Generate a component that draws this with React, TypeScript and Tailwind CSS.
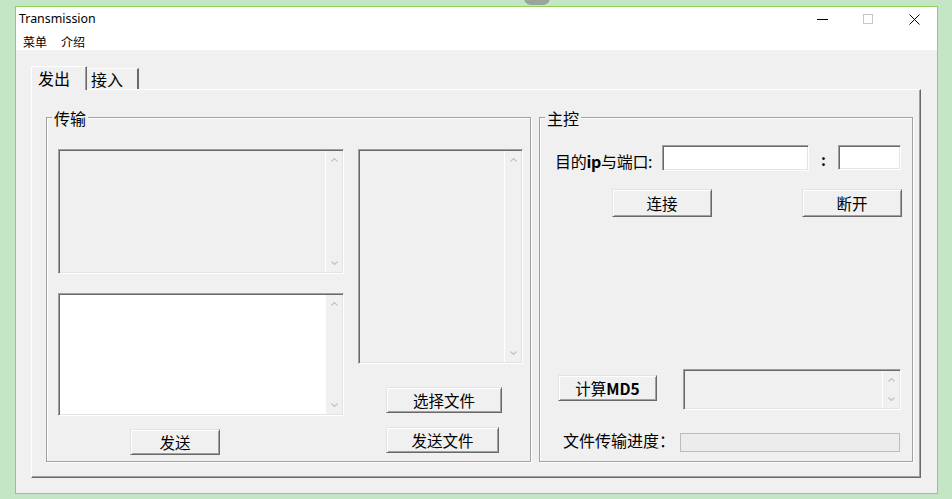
import React from "react";

const CJK = { fontFamily: '"Noto Sans CJK SC", "Noto Sans", sans-serif' };

function Up() {
  return (
    <svg width="7" height="4" viewBox="0 0 7 4">
      <path d="M0.5 3.5 L3.5 0.5 L6.5 3.5" fill="none" stroke="#c2c2c2" strokeWidth="1.2" />
    </svg>
  );
}
function Down() {
  return (
    <svg width="7" height="4" viewBox="0 0 7 4">
      <path d="M0.5 0.5 L3.5 3.5 L6.5 0.5" fill="none" stroke="#c2c2c2" strokeWidth="1.2" />
    </svg>
  );
}

function ScrollBar() {
  return (
    <div className="w-[17px] h-full shrink-0 border-l border-white bg-[#f0f0f0] flex flex-col items-center justify-between py-[7px]">
      <Up />
      <Down />
    </div>
  );
}

const sunken =
  "flex border border-t-[#a0a0a0] border-l-[#a0a0a0] border-b-white border-r-white shadow-[inset_1px_1px_0_#696969,inset_-1px_-1px_0_#e3e3e3] p-[1px]";

const raised =
  "flex items-center justify-center border border-t-[#e3e3e3] border-l-[#e3e3e3] border-b-[#696969] border-r-[#696969] bg-[#f0f0f0] shadow-[inset_1px_1px_0_#ffffff,inset_-1px_-1px_0_#a0a0a0] text-[15.5px] leading-[16px] text-black";

function Group({ label, className, children }: { label: string; className: string; children: React.ReactNode }) {
  return (
    <div className={"relative border border-[#a0a0a0] shadow-[inset_1px_1px_0_#ffffff,1px_1px_0_#ffffff] " + className}>
      <div className="absolute left-[5px] top-[-8px] px-[2px] bg-[#f0f0f0] text-[16px] leading-[16px] text-black" style={CJK}>
        {label}
      </div>
      {children}
    </div>
  );
}

export default function App() {
  return (
    <div className="relative w-[952px] h-[499px] overflow-hidden bg-[#c4e6c4] pt-[6px] pl-[15px]" style={CJK}>
      <div className="absolute left-[524px] top-[-2px] w-[26px] h-[7px] rounded-b-full bg-[#9aa69a]" />
      <div className="w-[923px] h-[488px] border border-[#8fd25a] bg-white flex flex-col">
        {/* title bar */}
        <div className="h-[26px] flex items-start shrink-0">
          <div
            className="pl-[3px] pt-[5px] text-[12.4px] leading-[14px] text-black flex-1"
            style={{ fontFamily: '"Noto Sans", "Liberation Sans", sans-serif' }}
          >
            Transmission
          </div>
          <div className="flex">
            <div className="w-[46px] h-[26px] flex justify-center pt-[7px]">
              <svg width="11" height="10" viewBox="0 0 11 10">
                <line x1="0" y1="5.5" x2="11" y2="5.5" stroke="#000" strokeWidth="1" />
              </svg>
            </div>
            <div className="w-[46px] h-[26px] flex justify-center pt-[7px]">
              <svg width="10" height="10" viewBox="0 0 10 10">
                <rect x="0.5" y="0.5" width="9" height="9" fill="none" stroke="#c6c6c6" strokeWidth="1" />
              </svg>
            </div>
            <div className="w-[46px] h-[26px] flex justify-center pt-[7px]">
              <svg width="11" height="11" viewBox="0 0 11 11">
                <path d="M0.5 0.5 L10.5 10.5 M10.5 0.5 L0.5 10.5" stroke="#000" strokeWidth="1" fill="none" />
              </svg>
            </div>
          </div>
        </div>
        {/* menu */}
        <div className="h-[17px] flex items-center pl-[7px] text-[12px] leading-[17px] text-black shrink-0">
          <span>菜单</span>
          <span className="ml-[14px]">介绍</span>
        </div>
        {/* client */}
        <div className="flex-1 bg-[#f0f0f0] pt-[16px] pl-[15px]">
          {/* tabs */}
          <div className="flex items-end h-[23px]">
            <div className="relative z-10 w-[56px] h-[24px] -mb-[1px] bg-[#f0f0f0] border-t border-l border-white border-r border-r-[#696969] shadow-[inset_-1px_0_0_#a0a0a0] flex items-start pl-[6px] pt-[3px] text-[16px] leading-[16px] text-black">
              发出
            </div>
            <div className="w-[52px] h-[21px] border-t border-white border-r-2 border-r-[#696969] flex items-start pl-[4px] pt-[2px] text-[16px] leading-[16px] text-black">
              接入
            </div>
          </div>
          {/* panel */}
          <div className="w-[890px] h-[389px] border border-t-white border-l-white border-b-[#696969] border-r-[#696969] shadow-[inset_-1px_-1px_0_#a0a0a0] flex pl-[14px] pt-[27px] gap-[8px]">
            <Group label="传输" className="w-[485px] h-[345px] flex pl-[11px] pt-[31px]">
              <div className="w-[286px] flex flex-col">
                <div className={sunken + " h-[125px] bg-[#f0f0f0]"}>
                  <div className="flex-1" />
                  <ScrollBar />
                </div>
                <div className={sunken + " h-[123px] mt-[19px] bg-white"}>
                  <div className="flex-1 bg-white" />
                  <ScrollBar />
                </div>
                <div className={raised + " w-[90px] h-[26px] mt-[13px] ml-[72px]"}>发送</div>
              </div>
              <div className="w-[165px] ml-[14px] flex flex-col">
                <div className={sunken + " h-[215px] bg-[#f0f0f0]"}>
                  <div className="flex-1" />
                  <ScrollBar />
                </div>
                <div className={raised + " w-[116px] h-[26px] mt-[23px] ml-[28px]"}>选择文件</div>
                <div className={raised + " w-[113px] h-[26px] mt-[14px] ml-[28px]"}>发送文件</div>
              </div>
            </Group>
            <Group label="主控" className="w-[374px] h-[345px] flex flex-col pl-[15px] pt-[27px]">
              <div className="flex items-start h-[26px]">
                <div className="w-[107px] mt-[8px] text-[16px] leading-[16px] text-black whitespace-nowrap tracking-[-0.3px]">
                  目的<span className="font-bold">ip</span>与端口:
                </div>
                <div className={sunken + " w-[147px] h-[26px] bg-white"} />
                <div className="w-[29px] mt-[7px] text-center text-[15px] leading-[16px] font-bold text-black">:</div>
                <div className={sunken + " w-[63px] h-[25px] bg-white"} />
              </div>
              <div className="flex mt-[18px]">
                <div className={raised + " w-[100px] h-[28px] ml-[57px] border-[#646464] border-t-[#646464] border-l-[#646464] shadow-[inset_1px_1px_0_#ffffff,inset_-1px_-1px_0_#696969,inset_-2px_-2px_0_#a0a0a0]"}>
                  连接
                </div>
                <div className={raised + " w-[100px] h-[28px] ml-[90px]"}>断开</div>
              </div>
              <div className="flex items-start mt-[152px]">
                <div className={raised + " w-[99px] h-[26px] mt-[6px] ml-[3px]"}>
                  计算<span className="font-bold">MD5</span>
                </div>
                <div className={sunken + " w-[218px] h-[41px] ml-[26px] bg-[#f0f0f0]"}>
                  <div className="flex-1" />
                  <ScrollBar />
                </div>
              </div>
              <div className="flex items-start mt-[23px]">
                <div className="w-[117px] ml-[8px] mt-[-1px] text-[16px] leading-[16px] text-black whitespace-nowrap">
                  文件传输进度：
                </div>
                <div className="w-[220px] h-[19px] border border-[#bcbcbc] bg-[#ececec]" />
              </div>
            </Group>
          </div>
        </div>
      </div>
    </div>
  );
}
